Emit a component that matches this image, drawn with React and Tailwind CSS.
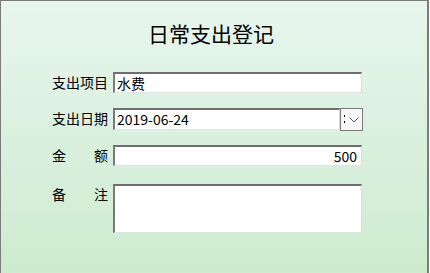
import React from 'react'

const font = { fontFamily: '"Noto Sans CJK SC", "Liberation Sans", sans-serif' }

const Sunken = ({ className, children }) => (
    <div className={'bg-white border-t-2 border-l-2 border-t-[#6e6e6e] border-l-[#7a7a7a] border-r border-b border-r-[#dcdcdc] border-b-[#e3e3e3] ' + className}>
        {children}
    </div>
)

const Label = ({ chars }) => (
    <div className='w-[56px] shrink-0 whitespace-nowrap flex justify-between text-[14px] leading-[21px] text-black'>
        {chars.map((c, i) => <span key={i}>{c}</span>)}
    </div>
)

const App = () => {
    return (
        <div style={font} className='w-[430px] h-[273px] overflow-hidden bg-white'>
            <div className='w-[429px] h-[273px] border-t border-l border-r-2 border-[#7b7b7b] bg-gradient-to-b from-[#e8f6ee] to-[#cdebcf]'>
                <h1 className='pt-[18px] pl-[147px] text-[21px] leading-[28px] text-black'>日常支出登记</h1>

                <div className='ml-[51px] mt-[25px] flex flex-col'>
                    <div className='flex items-start gap-[5px]'>
                        <Label chars={['支出项目']} />
                        <Sunken className='w-[249px] h-[21px] pl-[2px] text-[14px] leading-[18px]'>水费</Sunken>
                    </div>

                    <div className='flex items-start gap-[5px] mt-[15px]'>
                        <Label chars={['支出日期']} />
                        <Sunken className='w-[227px] h-[22px] pl-[2px] text-[14px] leading-[19px]'>2019-06-24</Sunken>
                        <div className='-ml-[5px] w-[23px] h-[23px] border border-[#7a7a7a] bg-[#f7f7f7] flex items-center relative'>
                            <span className='absolute left-[3px] top-[6px] w-[1px] h-[2px] bg-black'></span>
                            <span className='absolute left-[3px] top-[12px] w-[1px] h-[2px] bg-black'></span>
                            <svg width='10' height='6' viewBox='0 0 10 6' className='ml-[8px]'>
                                <path d='M0.5 0.5 L5 5 L9.5 0.5' fill='none' stroke='#555' strokeWidth='1' />
                            </svg>
                        </div>
                    </div>

                    <div className='flex items-start gap-[5px] mt-[14px]'>
                        <Label chars={['金', '额']} />
                        <Sunken className='w-[249px] h-[21px] pr-[4px] text-right text-[14px] leading-[18px]'>500</Sunken>
                    </div>

                    <div className='flex items-start gap-[5px] mt-[18px]'>
                        <Label chars={['备', '注']} />
                        <Sunken className='w-[249px] h-[49px]'></Sunken>
                    </div>
                </div>
            </div>
        </div>
    )
}

export default App
